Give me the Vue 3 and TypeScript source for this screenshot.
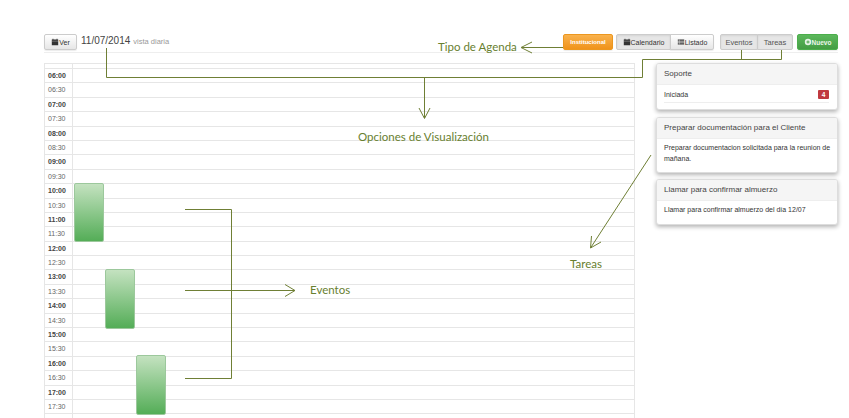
<script setup lang="ts">
interface Slot { label: string; major: boolean }
const slots: Slot[] = []
for (let h = 6; h <= 17; h++) {
  const hh = String(h).padStart(2, '0')
  slots.push({ label: `${hh}:00`, major: true })
  slots.push({ label: `${hh}:30`, major: false })
}
const events = [
  { id: 1, left: 29, top: 119, height: 59 },
  { id: 2, left: 60, top: 205, height: 60 },
  { id: 3, left: 91, top: 291, height: 60 },
]
</script>

<template>
  <div class="page">
    <header class="toolbar">
      <div class="left">
        <button class="btn ver">
          <svg class="ico" viewBox="0 0 10 10"><path d="M1 2h1V1h1v1h4V1h1v1h1v7H1z" fill="#333" /><path d="M1 4h8" stroke="#ccc" stroke-width=".5" /></svg>Ver
        </button>
        <span class="date">11/07/2014</span>
        <span class="mode">vista diaria</span>
      </div>
      <div class="right">
        <button class="btn orange">Institucional</button>
        <div class="group g1">
          <button class="btn active">
            <svg class="ico" viewBox="0 0 10 10"><path d="M1 2h1V1h1v1h4V1h1v1h1v7H1z" fill="#333" /><path d="M1 4h8" stroke="#ccc" stroke-width=".5" /></svg>Calendario
          </button>
          <button class="btn">
            <svg class="ico" viewBox="0 0 10 10"><path d="M1 2h8v1.4H1zM1 4.3h8v1.4H1zM1 6.6h8V8H1z" fill="#333" /><path d="M3 2v6" stroke="#eee" stroke-width=".5" /></svg>Listado
          </button>
        </div>
        <div class="group g2">
          <button class="btn active tab-a">Eventos</button>
          <button class="btn active tab-b">Tareas</button>
        </div>
        <button class="btn green">
          <svg class="ico" viewBox="0 0 10 10"><circle cx="5" cy="5" r="4" fill="#e6f3e6" /><path d="M5 3v4M3 5h4" stroke="#4fa64f" stroke-width="1.3" /></svg>Nuevo
        </button>
      </div>
    </header>

    <main class="content">
      <section class="calendar">
        <div class="head"><span class="time-cell"></span><span class="cell"></span></div>
        <div v-for="s in slots" :key="s.label" class="row">
          <span class="time-cell" :class="{ major: s.major }">{{ s.label }}</span>
          <span class="cell"></span>
        </div>
        <div class="row"><span class="time-cell"></span><span class="cell"></span></div>
        <div
          v-for="e in events"
          :key="e.id"
          class="event"
          :style="{ left: e.left + 'px', top: e.top + 'px', height: e.height + 'px' }"
        ></div>
      </section>

      <aside class="side">
        <article class="card c1">
          <h3>Soporte</h3>
          <div class="body status"><span>Iniciada</span><b class="badge">4</b></div>
        </article>
        <article class="card c2">
          <h3>Preparar documentación para el Cliente</h3>
          <p class="body wide">Preparar documentacion solicitada para la reunion de mañana.</p>
        </article>
        <article class="card c3">
          <h3>Llamar para confirmar almuerzo</h3>
          <p class="body">Llamar para confirmar almuerzo del día 12/07</p>
        </article>
      </aside>
    </main>

    <svg class="arrows" width="849" height="418" viewBox="0 0 849 418" fill="none" stroke="#6f7f35" stroke-width="1">
      <path d="M563 47.500H522M532 42L521 47.500L532 53" />
      <path d="M106.500 48V77.500H642.500V59.500H781.500V50M741.500 50V59.500" />
      <path d="M424.500 77V118M419 108L424.500 118.500L430 108" />
      <path d="M651 155L590.500 248M591.500 236L590.500 248L601 242" />
      <path d="M185 209.500H231.500V378.500H185M185 290.500H295M285 284.500L295 290.500L285 296.500" />
    </svg>
    <span class="note n1">Tipo de Agenda</span>
    <span class="note n2">Opciones de Visualización</span>
    <span class="note n3">Tareas</span>
    <span class="note n4">Eventos</span>
  </div>
</template>

<style>
html, body { margin: 0; background: #fff; overflow: hidden; }
</style>

<style scoped>
.page {
  position: relative;
  width: 849px;
  height: 418px;
  overflow: hidden;
  box-sizing: border-box;
  padding: 34px 11px 0 44px;
  font-family: "Liberation Sans", Arial, sans-serif;
  color: #333;
}
.toolbar {
  height: 16px;
  padding-bottom: 2px;
  border-bottom: 1px solid #eee;
  display: flex;
  justify-content: space-between;
}
.left, .right, .group { display: flex; align-items: flex-start; }
.btn {
  height: 16px;
  box-sizing: border-box;
  margin: 0;
  padding: 0;
  display: inline-flex;
  align-items: center;
  justify-content: center;
  border: 1px solid #ccc;
  border-radius: 2px;
  background: linear-gradient(#fff, #e6e6e6);
  box-shadow: 0 1px 1px rgba(0, 0, 0, .08);
  font: 7px "Liberation Sans", Arial, sans-serif;
  color: #333;
}
.ico { width: 8px; height: 8px; flex: none; }
.ver { width: 33px; }
.date { margin-left: 4px; font-size: 10px; line-height: 14px; color: #444; }
.mode { margin-left: 3px; font-size: 7.500px; line-height: 16px; color: #999; }
.orange {
  width: 50px;
  border-color: #ec971f;
  background: linear-gradient(#f9b24d, #f0931b);
  color: #fff;
  font-weight: 700;
  font-size: 6px;
}
.green {
  width: 41px;
  margin-left: 4px;
  border-color: #4cae4c;
  background: linear-gradient(#5cb85c, #449d44);
  color: #eaf5ea;
  font-weight: 700;
  font-size: 6.500px;
}
.group { margin-left: 3px; }
.group .btn { border-radius: 0; }
.group .btn:first-child { border-radius: 2px 0 0 2px; }
.group .btn:last-child { border-radius: 0 2px 2px 0; margin-left: -1px; }
.g1 .btn:first-child { width: 55px; }
.g1 .btn:last-child { width: 44px; }
.g2 { margin-left: 6px; }
.g2 .btn { font-size: 7.500px; color: #555; }
.g2 .btn.tab-a { width: 38px; }
.g2 .btn.tab-b { width: 36px; }
.active { background: #e6e6e6; box-shadow: inset 0 1px 2px rgba(0, 0, 0, .08); }
.content {
  display: flex;
  justify-content: space-between;
  margin-top: 10px;
}
.calendar {
  position: relative;
  width: 591px;
  box-sizing: border-box;
  border: 1px solid #e6e6e6;
  border-bottom: 0;
}
.head { height: 4px; display: flex; border-bottom: 1px solid #e6e6e6; }
.row {
  height: 14.400px;
  box-sizing: border-box;
  display: flex;
  border-bottom: 1px solid #e6e6e6;
}
.time-cell {
  width: 28px;
  flex: none;
  box-sizing: border-box;
  border-right: 1px solid #e6e6e6;
  padding-left: 3px;
  font-size: 7px;
  line-height: 13.400px;
  color: #666;
}
.time-cell.major { font-weight: 700; color: #444; }
.cell { flex: 1; }
.event {
  position: absolute;
  width: 30px;
  box-sizing: border-box;
  border: 1px solid #9cc89c;
  border-radius: 2px;
  background: linear-gradient(#c4e2c0, #54ad57);
}
.side {
  width: 182px;
  display: flex;
  flex-direction: column;
  gap: 6.500px;
}
.card {
  box-sizing: border-box;
  background: #fff;
  border: 1px solid #ddd;
  border-radius: 3px;
  box-shadow: 0 2px 4px rgba(0, 0, 0, .3);
  overflow: hidden;
}
.c1 { height: 47px; }
.c2 { height: 56px; }
.c3 { height: 46px; }
.card h3 {
  margin: 0;
  height: 20px;
  padding-left: 7px;
  background: #f5f5f5;
  border-bottom: 1px solid #eee;
  font-size: 8px;
  font-weight: 400;
  line-height: 19px;
  color: #444;
}
.body {
  margin: 3px 8px 0 7px;
  font-size: 7px;
  line-height: 11.500px;
  color: #333;
}
.wide { margin-right: 2px; }
.status {
  display: flex;
  justify-content: space-between;
  align-items: center;
  height: 11px;
  margin-top: 4px;
  padding-bottom: 2px;
  border-bottom: 1px solid #eee;
}
.badge {
  width: 11px;
  height: 9px;
  background: #c0393f;
  border-radius: 1px;
  color: #fff;
  font-size: 6.500px;
  line-height: 9px;
  text-align: center;
}
.arrows { position: absolute; left: 0; top: 0; pointer-events: none; }
.note {
  position: absolute;
  font-family: Lato, sans-serif;
  font-size: 11.500px;
  line-height: 16px;
  color: #68802f;
  white-space: nowrap;
}
.n1 { left: 438px; top: 39px; }
.n2 { left: 358px; top: 129px; }
.n3 { left: 570px; top: 256px; }
.n4 { left: 310px; top: 282px; }
</style>
